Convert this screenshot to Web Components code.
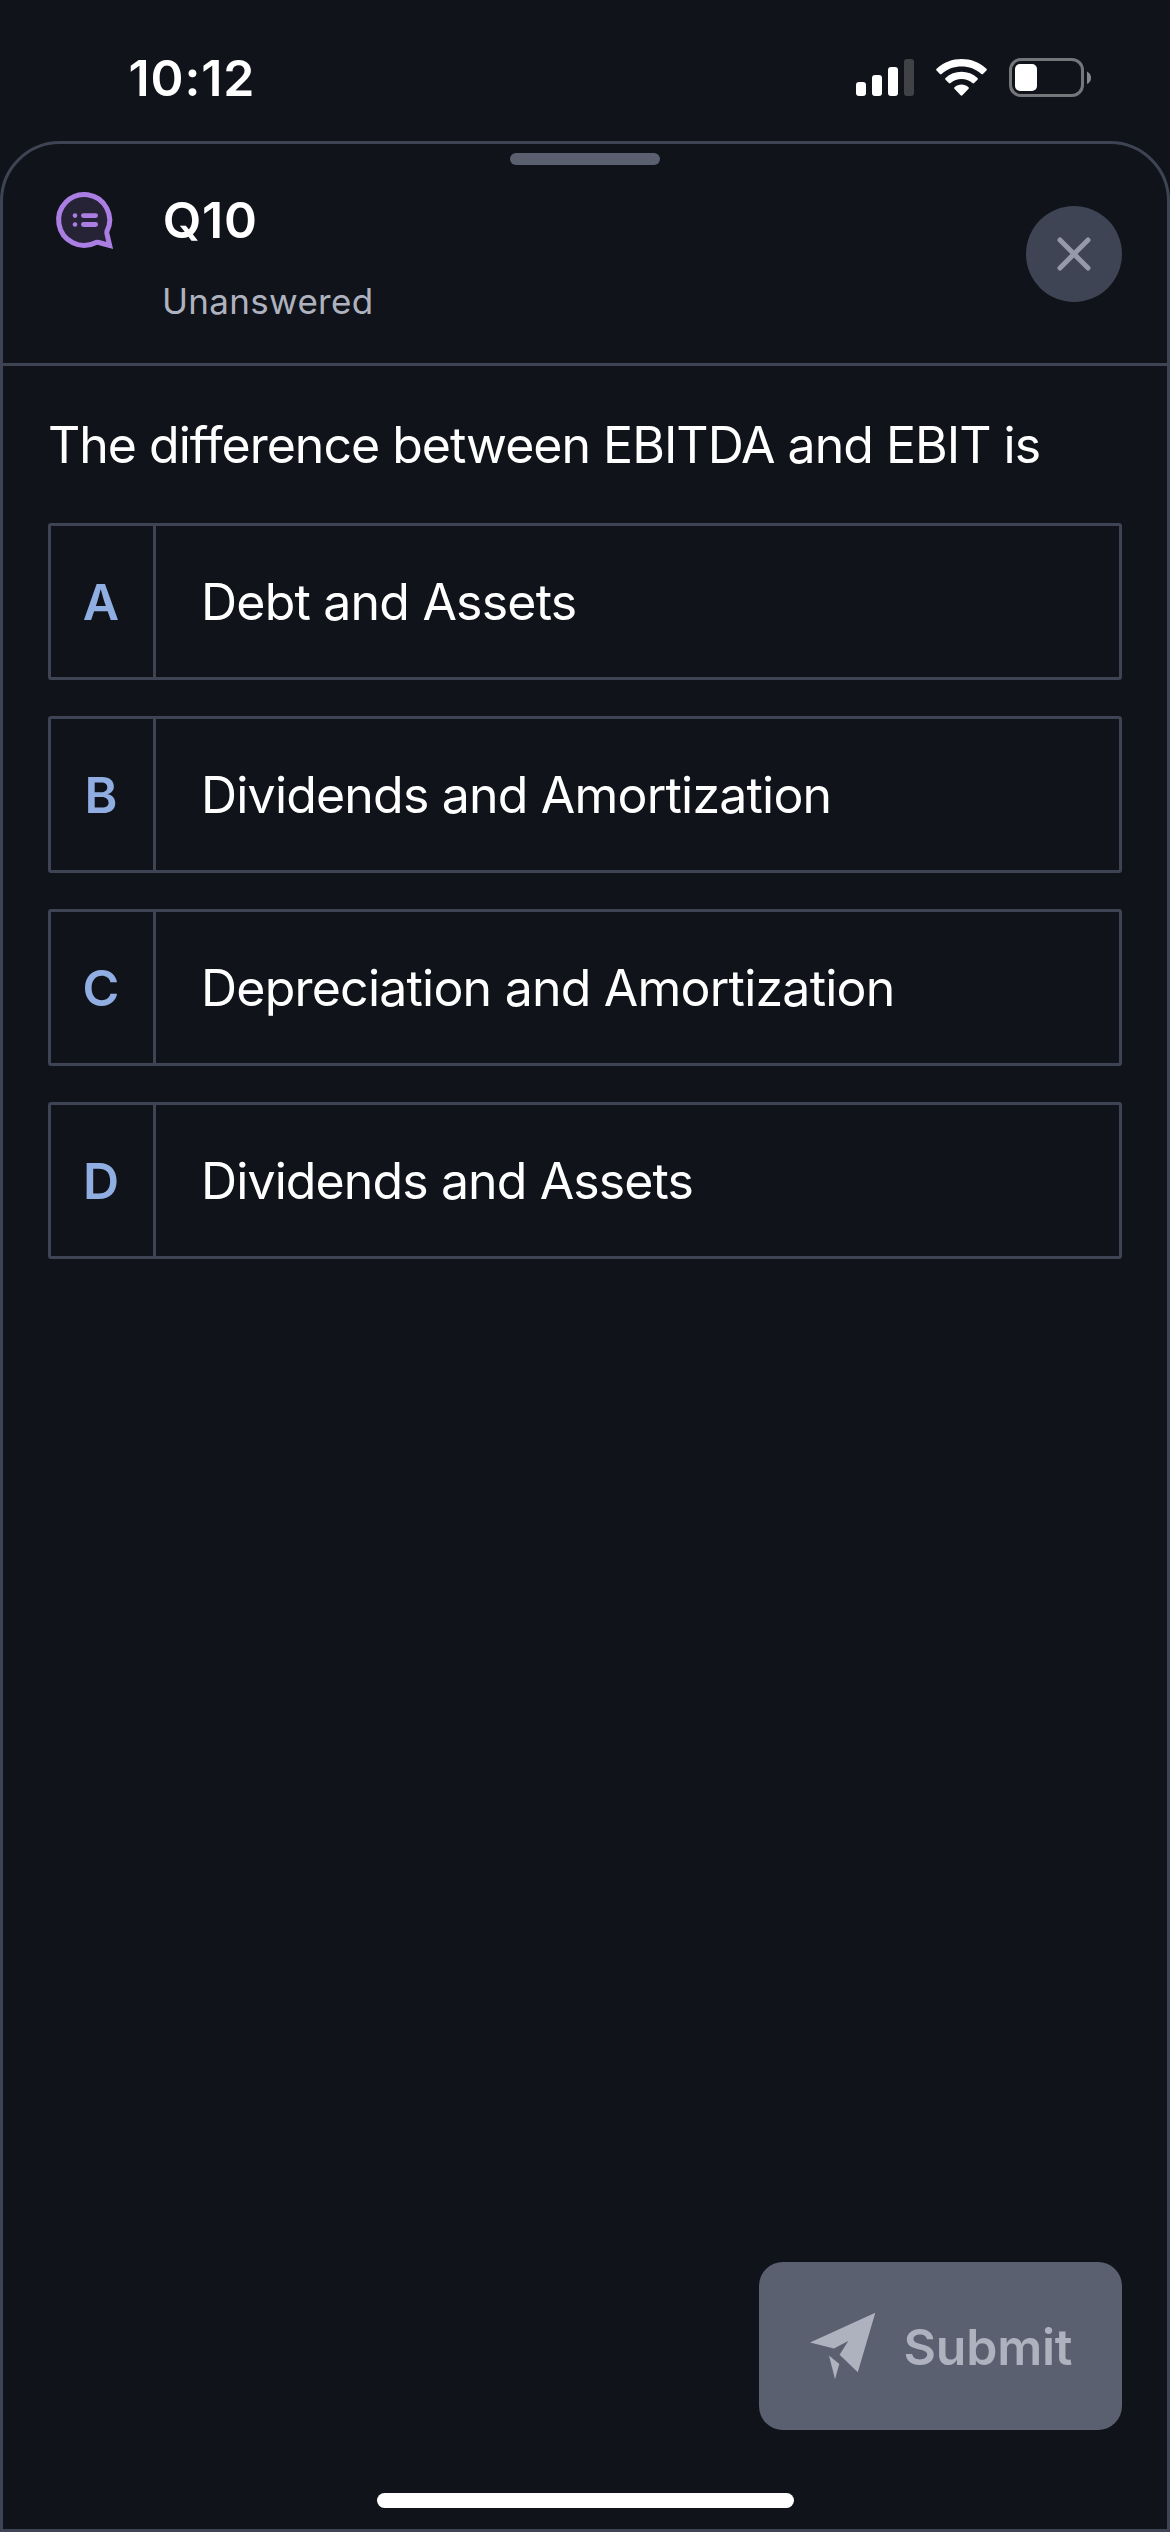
<!DOCTYPE html>
<html lang="en">
<head>
<meta charset="utf-8">
<title>Q10</title>
<style>
  html, body { margin: 0; height: 100%; background: #10131a; }
  body { font-family: Inter, "Liberation Sans", sans-serif; color: #fff; overflow: hidden; }
</style>
</head>
<body>
<quiz-screen>
  <status-bar slot="status" time="10:12"></status-bar>
  <quiz-sheet>
    <sheet-header slot="header">
      <span slot="title">Q10</span>
      <span slot="subtitle">Unanswered</span>
    </sheet-header>
    <quiz-question>The difference between EBITDA and EBIT is</quiz-question>
    <answer-list>
      <answer-option letter="A" style="--tracking:-.797px">Debt and Assets</answer-option>
      <answer-option letter="B" style="--tracking:-.8px">Dividends and Amortization</answer-option>
      <answer-option letter="C" style="--tracking:-.78px">Depreciation and Amortization</answer-option>
      <answer-option letter="D" style="--tracking:-.888px">Dividends and Assets</answer-option>
    </answer-list>
    <submit-button slot="action">Submit</submit-button>
  </quiz-sheet>
</quiz-screen>
<script>
const define = (name, render) => customElements.define(name, class extends HTMLElement {
  constructor() {
    super();
    this.attachShadow({ mode: 'open' }).innerHTML = render(this);
  }
});

define('quiz-screen', () => `
  <style>
    :host { display: flex; flex-direction: column; width: 1170px; height: 2532px; background: #10131a; }
  </style>
  <slot name="status"></slot><slot></slot>`);

define('status-bar', el => `
  <style>
    :host { display: flex; justify-content: space-between; height: 141px; box-sizing: border-box;
      padding: 48px 78px 0 128.5px; flex: none; }
    .time { font-weight: 600; font-size: 50px; line-height: 60px; letter-spacing: .897px; }
    .icons { display: flex; align-items: flex-start; gap: 20px; padding-top: 9px; }
    svg { display: block; }
  </style>
  <div class="time">${el.getAttribute('time')}</div>
  <div class="icons">
    <svg width="236" height="42" viewBox="856 57 236 42">
      <g fill="#fff">
        <rect x="856" y="82" width="10" height="14" rx="3"/>
        <rect x="872" y="75" width="10" height="21" rx="3"/>
        <rect x="888" y="67" width="10" height="29" rx="3"/>
        <rect x="904" y="59" width="10" height="37" rx="3" fill="#414246"/>
        <path d="M936.6 70.6Q935.7 69.7 936.6 68.8C950.4 55.8 972.8 55.8 986.4 68.8Q987.3 69.7 986.4 70.6L983 74Q982.2 74.700 981.300 73.900C970.700 64 952.300 64 941.600 73.900Q940.700 74.700 939.900 74Z"/>
        <path d="M945.500 79.700Q944.700 78.900 945.500 78C954 69.700 968.900 69.700 977.500 78Q978.300 78.900 977.500 79.700L974.100 83.100Q973.300 83.900 972.400 83.100C966.300 77.600 956.700 77.600 950.600 83.100Q949.700 83.900 948.900 83.100Z"/>
        <path d="M954.400 88.800Q953.600 88 954.500 87.200C958.500 83.700 964.500 83.700 968.500 87.200Q969.400 88 968.600 88.800L962.400 95.200Q961.500 96.100 960.600 95.200Z"/>
        <rect x="1015" y="64" width="22" height="27" rx="5"/>
      </g>
      <rect x="1010.500" y="59.500" width="72" height="36" rx="10.500" fill="none" stroke="#75767a" stroke-width="3"/>
      <path d="M1087 71.500Q1091 73.500 1091 77.700Q1091 82 1087 84Z" fill="#87888b"/>
    </svg>
  </div>`);

define('quiz-sheet', () => `
  <style>
    :host { display: flex; flex-direction: column; flex: 1; box-sizing: border-box; min-height: 0;
      border: 3px solid #3e4453; border-radius: 60px 60px 0 0; padding-top: 9px; }
    .handle { width: 150px; height: 12px; border-radius: 6px; background: #5a6070; align-self: center; flex: none; }
    main { flex: 1; display: flex; flex-direction: column; padding: 49px 45px 0; }
    footer { display: flex; flex-direction: column; align-items: flex-end; padding: 0 45px 21px; gap: 63px; }
    .home { align-self: center; width: 417px; height: 15px; border-radius: 7.500px; background: #fff; }
  </style>
  <div class="handle"></div>
  <slot name="header"></slot>
  <main><slot></slot></main>
  <footer><slot name="action"></slot><div class="home"></div></footer>`);

define('sheet-header', () => `
  <style>
    :host { display: flex; align-items: flex-start; height: 201px; flex: none; box-sizing: border-box;
      padding: 25px 45px 0 51px; border-bottom: 3px solid #3e4453; }
    svg { display: block; flex: none; }
    .text { flex: 1; display: flex; flex-direction: column; gap: 29px; padding-left: 46px; }
    .title { font-weight: 600; font-size: 50px; line-height: 60px; letter-spacing: .755px; padding-left: .7px; }
    .sub { font-size: 35px; line-height: 44px; letter-spacing: .306px; color: #aeb2bf; }
    .close { margin-top: 16px; width: 96px; height: 96px; border-radius: 50%; background: #3e4453;
      border: 0; padding: 0; display: flex; align-items: center; justify-content: center; }
  </style>
  <svg width="62" height="62" viewBox="54 190 62 62">
    <path d="M107 231.200A25.500 25.500 0 1 0 96 242.500Q97.300 242.200 98.800 242.500L109.700 245.500L106.900 233.500Q106.700 232.200 107 231.200Z" fill="#272337" stroke="#aa7ee2" stroke-width="5" stroke-miterlimit="8"/>
    <g fill="#aa7ee2">
      <circle cx="75" cy="215.600" r="2.300"/><circle cx="75" cy="224.500" r="2.300"/>
      <rect x="81" y="213.200" width="17" height="4.800" rx="2.400"/>
      <rect x="81" y="222.100" width="17" height="4.800" rx="2.400"/>
    </g>
  </svg>
  <div class="text">
    <div class="title"><slot name="title"></slot></div>
    <div class="sub"><slot name="subtitle"></slot></div>
  </div>
  <button class="close" aria-label="Close">
    <svg width="40" height="40" viewBox="-20 -20 40 40">
      <path d="M-14-14L14 14M14-14L-14 14" stroke="#9599a8" stroke-width="5" stroke-linecap="round"/>
    </svg>
  </button>`);

define('quiz-question', () => `
  <style>
    :host { display: block; font-size: 50px; line-height: 60px; letter-spacing: -.985px; white-space: nowrap; }
  </style><slot></slot>`);

define('answer-list', () => `
  <style>
    :host { display: flex; flex-direction: column; gap: 36px; padding-top: 48px; }
  </style><slot></slot>`);

define('answer-option', el => `
  <style>
    :host { display: flex; height: 157px; box-sizing: border-box; border: 3px solid #3e4453; border-radius: 3px;
      font-size: 50px; line-height: 60px; }
    .letter { width: 102px; border-right: 3px solid #3e4453; display: flex; align-items: center;
      justify-content: center; font-weight: 600; color: #90aee2; padding: 1px 2px 0 0; box-sizing: border-box; width: 105px; }
    .label { display: flex; align-items: center; padding-left: 45px; letter-spacing: var(--tracking); white-space: nowrap; }
  </style>
  <div class="letter">${el.getAttribute('letter')}</div>
  <div class="label"><slot></slot></div>`);

define('submit-button', () => `
  <style>
    :host { display: flex; align-items: center; width: 363px; height: 168px; box-sizing: border-box;
      padding-left: 49px; gap: 27.500px; border-radius: 24px; background: #5a6070; color: #aeb2bf; }
    svg { display: block; }
    .label { font-weight: 600; font-size: 50px; line-height: 60px; letter-spacing: -.228px; padding-top: 2px; }
  </style>
  <svg width="68" height="68" viewBox="808 2312 68 68" fill="#aeb2bf">
    <path d="M810 2342.600L875.300 2312.800L857.800 2372.300L839.600 2354.700L848.200 2341L834 2348.400Z"/>
    <path d="M829 2355.600L839.300 2364L835 2379.200Z"/>
  </svg>
  <div class="label"><slot></slot></div>`);
</script>
</body>
</html>
